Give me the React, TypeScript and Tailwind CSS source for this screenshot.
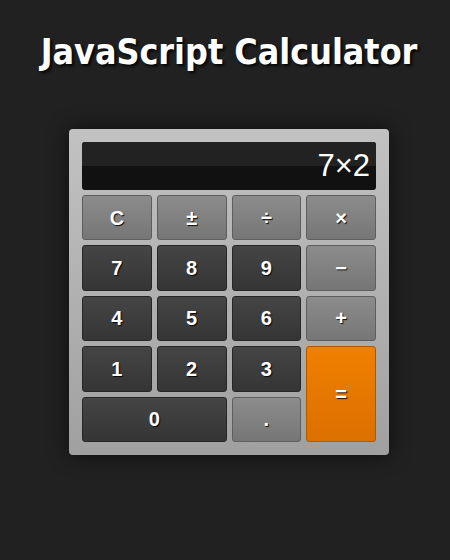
import React from "react";

type Kind = "dark" | "grey" | "orange";

const btnBase =
  "flex items-center justify-center rounded-[3px] border text-white font-bold text-[20px] [text-shadow:1px_1px_1px_rgba(0,0,0,0.9)]";

const kindCls: Record<Kind, string> = {
  dark: "bg-gradient-to-b from-[#454545] to-[#353535] border-[#262626]",
  grey: "bg-gradient-to-b from-[#8c8c8c] to-[#767676] border-[#5e5e5e]",
  orange: "bg-gradient-to-b from-[#f08000] to-[#dc7000] border-[#b05800]",
};

function Key({ label, kind, extra = "" }: { label: string; kind: Kind; extra?: string }) {
  return <div className={`${btnBase} ${kindCls[kind]} ${extra}`}>{label}</div>;
}

export default function App() {
  return (
    <div
      className="min-h-[560px] w-full bg-[#212121] pl-[8px]"
      style={{ fontFamily: '"Liberation Sans", Arial, sans-serif' }}
    >
      <div className="flex flex-col items-center pt-[29px]">
        <h1
          className="text-white font-bold text-[35.5px] leading-[46px] [text-shadow:2px_2px_3px_rgba(0,0,0,0.9)]"
          style={{ fontFamily: '"DejaVu Sans Condensed", "DejaVu Sans", sans-serif' }}
        >
          JavaScript Calculator
        </h1>
        <div className="mt-[54px] w-[320px] rounded-[4px] bg-gradient-to-b from-[#c2c2c2] to-[#a0a0a0] p-[13px] shadow-[0_0_20px_rgba(0,0,0,0.6)]">
          <div className="relative h-[48px] overflow-hidden rounded-[3px] bg-[#111]">
            <div className="absolute inset-x-0 top-0 h-[24px] bg-[#222]" />
            <div className="relative flex h-full items-center justify-end pr-[6px] text-[31px] text-white">
              7×2
            </div>
          </div>
          <div className="mt-[5px] grid grid-cols-4 grid-rows-[repeat(5,45.4px)] gap-[5px]">
            <Key label="C" kind="grey" />
            <Key label="±" kind="grey" />
            <Key label="÷" kind="grey" />
            <Key label="×" kind="grey" />
            <Key label="7" kind="dark" />
            <Key label="8" kind="dark" />
            <Key label="9" kind="dark" />
            <Key label="−" kind="grey" />
            <Key label="4" kind="dark" />
            <Key label="5" kind="dark" />
            <Key label="6" kind="dark" />
            <Key label="+" kind="grey" />
            <Key label="1" kind="dark" />
            <Key label="2" kind="dark" />
            <Key label="3" kind="dark" />
            <Key label="=" kind="orange" extra="row-span-2" />
            <Key label="0" kind="dark" extra="col-span-2" />
            <Key label="." kind="grey" />
          </div>
        </div>
      </div>
    </div>
  );
}
